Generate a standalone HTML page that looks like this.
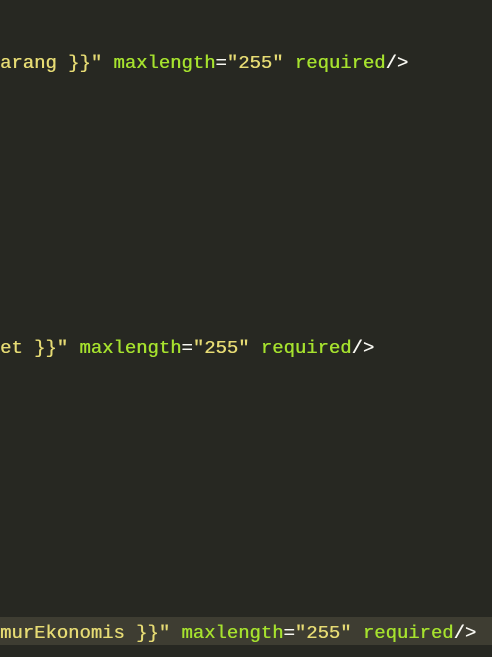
<!DOCTYPE html>
<html><head><style>
html,body{margin:0;padding:0;width:492px;height:657px;background:#272822;overflow:hidden}
.l{position:absolute;left:0;height:28px;line-height:28px;font-family:"Liberation Mono",monospace;font-size:18.9px;white-space:pre;color:#f8f8f2;text-shadow:0.4px 0 0 currentColor}
.y{color:#e6db74}.g{color:#a6e22e}.w{color:#f8f8f2}
.hl{background:#3e3d32;width:492px}
.t{position:relative;top:2px}
</style></head><body>
<div class="l" style="top:47px"><span class="t"><span class="y">arang }}"</span> <span class="g">maxlength</span><span class="w">=</span><span class="y">"255"</span> <span class="g">required</span><span class="w">/&gt;</span></span></div>
<div class="l" style="top:332px"><span class="t"><span class="y">et }}"</span> <span class="g">maxlength</span><span class="w">=</span><span class="y">"255"</span> <span class="g">required</span><span class="w">/&gt;</span></span></div>
<div class="l hl" style="top:617px"><span class="t"><span class="y">murEkonomis }}"</span> <span class="g">maxlength</span><span class="w">=</span><span class="y">"255"</span> <span class="g">required</span><span class="w">/&gt;</span></span></div>
</body></html>
